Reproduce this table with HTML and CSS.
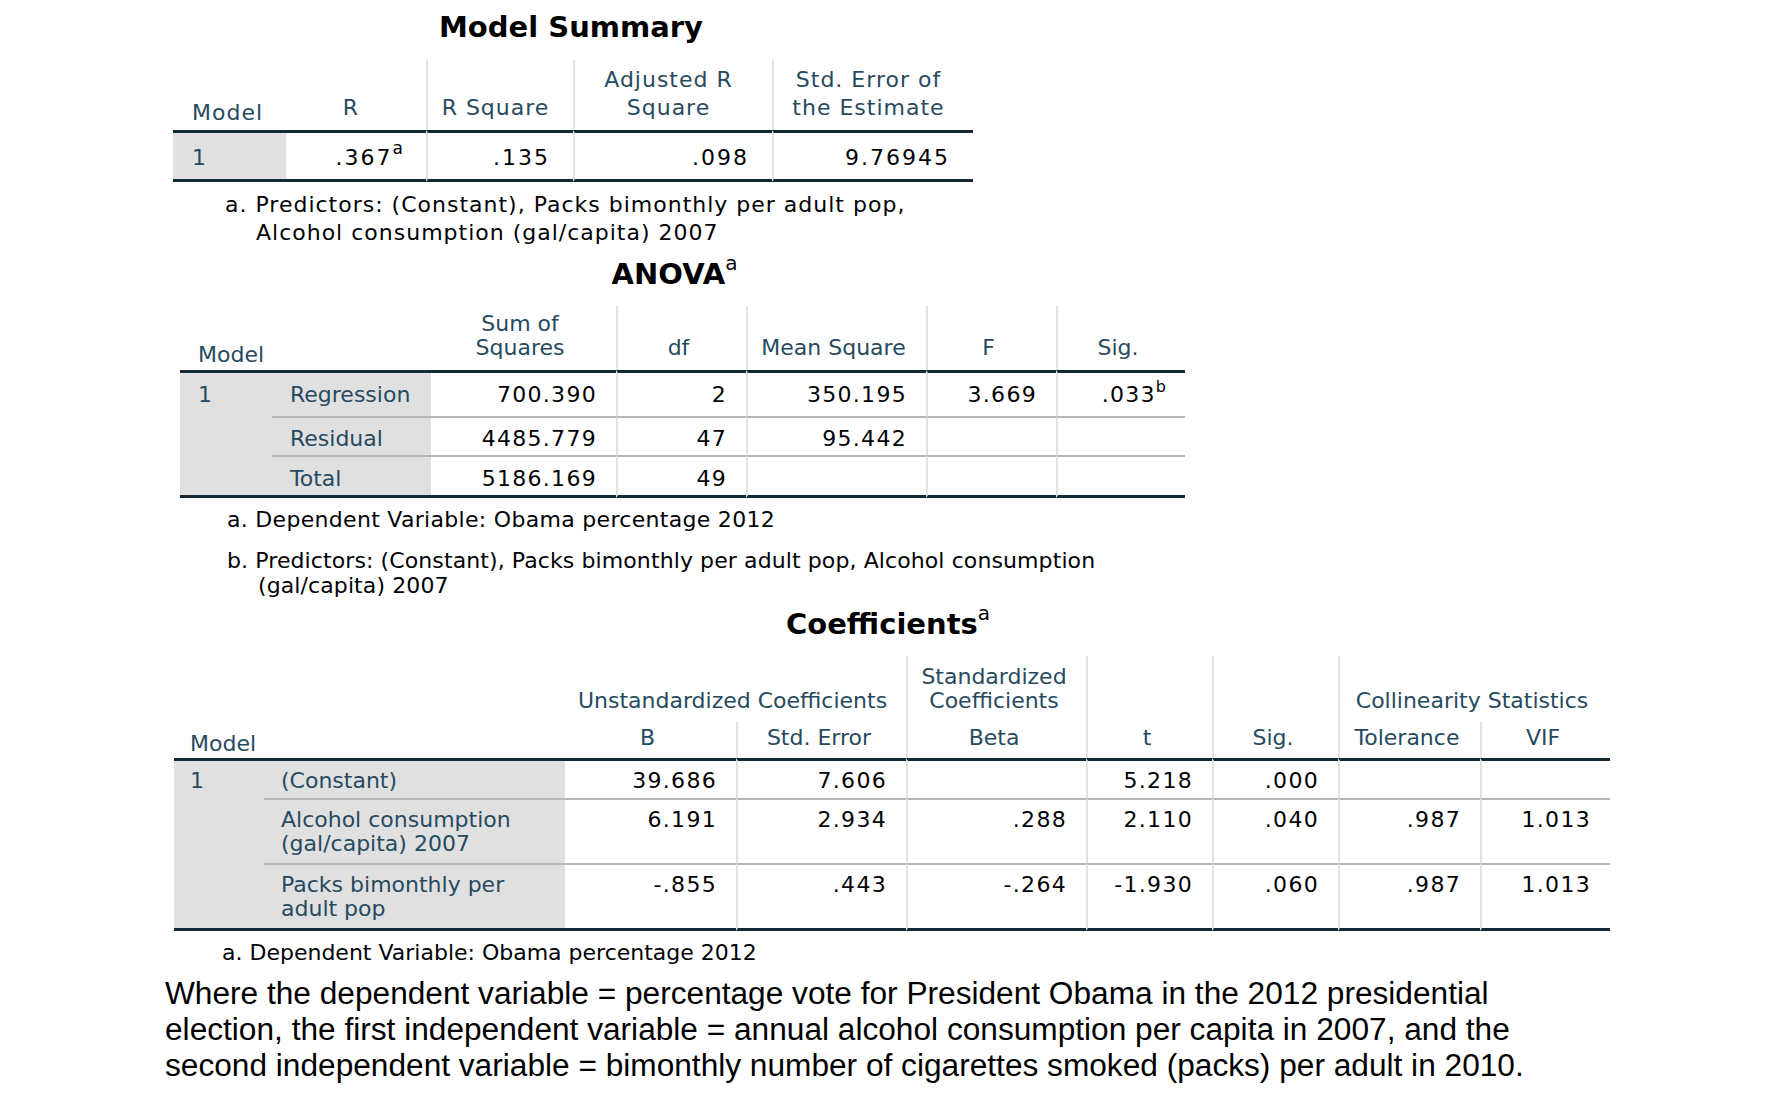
FILE: index.html
```html
<!DOCTYPE html>
<html lang="en">
<head>
<meta charset="utf-8">
<title>Regression output</title>
<link rel="stylesheet" href="styles.css">
</head>
<body>
<main class="page">

  <section class="block ms">
    <h2 class="title">Model Summary</h2>
    <table class="tbl">
      <colgroup><col class="w1"><col class="w2"><col class="w3"><col class="w4"><col class="w5"></colgroup>
      <thead>
        <tr>
          <th class="hd left model">Model</th>
          <th class="hd">R</th>
          <th class="hd vl">R Square</th>
          <th class="hd vl two">Adjusted R<br>Square</th>
          <th class="hd vl two">Std. Error of<br>the Estimate</th>
        </tr>
      </thead>
      <tbody>
        <tr class="first last">
          <td class="lab">1</td>
          <td class="num">.367<sup>a</sup></td>
          <td class="num vl">.135</td>
          <td class="num vl">.098</td>
          <td class="num vl">9.76945</td>
        </tr>
      </tbody>
    </table>
  </section>
  <p class="fn fn-ms">a. Predictors: (Constant), Packs bimonthly per adult pop,<br>Alcohol consumption (gal/capita) 2007</p>

  <section class="block anova">
    <h2 class="title">ANOVA<sup>a</sup></h2>
    <table class="tbl">
      <colgroup><col class="w1"><col class="w2"><col class="w3"><col class="w4"><col class="w5"><col class="w6"><col class="w7"></colgroup>
      <thead>
        <tr>
          <th class="hd left model" colspan="2">Model</th>
          <th class="hd two">Sum of<br>Squares</th>
          <th class="hd vl">df</th>
          <th class="hd vl">Mean Square</th>
          <th class="hd vl">F</th>
          <th class="hd vl">Sig.</th>
        </tr>
      </thead>
      <tbody>
        <tr class="first r1">
          <td class="lab mnum" rowspan="3">1</td>
          <td class="lab">Regression</td>
          <td class="num">700.390</td>
          <td class="num vl">2</td>
          <td class="num vl">350.195</td>
          <td class="num vl">3.669</td>
          <td class="num vl">.033<sup>b</sup></td>
        </tr>
        <tr class="sep r2">
          <td class="lab">Residual</td>
          <td class="num">4485.779</td>
          <td class="num vl">47</td>
          <td class="num vl">95.442</td>
          <td class="num vl"></td>
          <td class="num vl"></td>
        </tr>
        <tr class="sep last r3">
          <td class="lab">Total</td>
          <td class="num">5186.169</td>
          <td class="num vl">49</td>
          <td class="num vl"></td>
          <td class="num vl"></td>
          <td class="num vl"></td>
        </tr>
      </tbody>
    </table>
  </section>
  <p class="fn fn-an fn-a">a. Dependent Variable: Obama percentage 2012</p>
  <p class="fn fn-an fn-b">b. Predictors: (Constant), Packs bimonthly per adult pop, Alcohol consumption<br>(gal/capita) 2007</p>

  <section class="block coef">
    <h2 class="title">Coefficients<sup>a</sup></h2>
    <table class="tbl">
      <colgroup><col class="w1"><col class="w2"><col class="w3"><col class="w4"><col class="w5"><col class="w6"><col class="w7"><col class="w8"><col class="w9"></colgroup>
      <thead>
        <tr class="h1">
          <th class="hd left model" colspan="2" rowspan="2">Model</th>
          <th class="hd" colspan="2">Unstandardized Coefficients</th>
          <th class="hd vl">Standardized<br>Coefficients</th>
          <th class="hd vl span" rowspan="2">t</th>
          <th class="hd vl span" rowspan="2">Sig.</th>
          <th class="hd vl" colspan="2">Collinearity Statistics</th>
        </tr>
        <tr class="h2">
          <th class="hd">B</th>
          <th class="hd vl">Std. Error</th>
          <th class="hd vl">Beta</th>
          <th class="hd vl">Tolerance</th>
          <th class="hd vl">VIF</th>
        </tr>
      </thead>
      <tbody>
        <tr class="first r1">
          <td class="lab mnum" rowspan="3">1</td>
          <td class="lab">(Constant)</td>
          <td class="num">39.686</td>
          <td class="num vl">7.606</td>
          <td class="num vl"></td>
          <td class="num vl">5.218</td>
          <td class="num vl">.000</td>
          <td class="num vl"></td>
          <td class="num vl"></td>
        </tr>
        <tr class="sep r2">
          <td class="lab">Alcohol consumption<br>(gal/capita) 2007</td>
          <td class="num">6.191</td>
          <td class="num vl">2.934</td>
          <td class="num vl">.288</td>
          <td class="num vl">2.110</td>
          <td class="num vl">.040</td>
          <td class="num vl">.987</td>
          <td class="num vl">1.013</td>
        </tr>
        <tr class="sep last r3">
          <td class="lab">Packs bimonthly per<br>adult pop</td>
          <td class="num">-.855</td>
          <td class="num vl">.443</td>
          <td class="num vl">-.264</td>
          <td class="num vl">-1.930</td>
          <td class="num vl">.060</td>
          <td class="num vl">.987</td>
          <td class="num vl">1.013</td>
        </tr>
      </tbody>
    </table>
  </section>
  <p class="fn fn-co">a. Dependent Variable: Obama percentage 2012</p>

  <p class="note">Where the dependent variable = percentage vote for President Obama in the 2012 presidential<br>election, the first independent variable = annual alcohol consumption per capita in 2007, and the<br>second independent variable = bimonthly number of cigarettes smoked (packs) per adult in 2010.</p>

</main>
</body>
</html>
```

FILE: styles.css
```css
html, body {
  margin: 0;
  padding: 0;
  background: #ffffff;
}

body {
  font-family: "DejaVu Sans", "Noto Sans", sans-serif;
  font-size: 22px;
  color: #010205;
}

.page {
  padding-top: 10px;
}

/* ---------- titles ---------- */
.title {
  margin: 0;
  font-size: 29px;
  line-height: 34px;
  font-weight: bold;
  text-align: center;
  color: #000000;
  letter-spacing: 0;
}

.title sup {
  font-size: 20px;
  font-weight: normal;
  line-height: 0;
  vertical-align: 14px;
}

/* ---------- tables ---------- */
.tbl {
  border-collapse: separate;
  border-spacing: 0;
  table-layout: fixed;
  margin-top: 15px;
}

.tbl th,
.tbl td {
  padding: 0;
  font-weight: normal;
  white-space: nowrap;
  line-height: 24px;
}

.hd {
  color: #264a60;
  text-align: center;
  vertical-align: bottom;
}

.hd.left {
  text-align: left;
}

.lab {
  color: #264a60;
  text-align: left;
  vertical-align: top;
  background: #e0e0e0;
}

.num {
  text-align: right;
  vertical-align: top;
  letter-spacing: 1.3px;
  padding-right: 19px !important;
}

.num sup {
  font-size: 16px;
  line-height: 0;
  letter-spacing: 0;
  vertical-align: 10px;
}

.vl {
  border-left: 2px solid #e2e2e2;
}

.first td {
  border-top: 3px solid #152935;
}

.sep td {
  border-top: 2px solid #b7b7b7;
}

.last td,
.mnum {
  border-bottom: 3px solid #152935;
}

/* ---------- footnotes ---------- */
.fn {
  margin: 9px 0 0 0;
  line-height: 25px;
  color: #010205;
  white-space: nowrap;
  padding-left: 31px;
  text-indent: -31px;
}

.fn-b {
  margin-top: 16px;
}

/* ---------- Model Summary ---------- */
.ms {
  margin-left: 173px;
  width: 800px;
  letter-spacing: 1px;
}

.ms .title {
  letter-spacing: 0;
  padding-right: 4px;
}

.ms .tbl {
  width: 800px;
  margin-top: 16px;
}

.ms .w1 { width: 113px; }
.ms .w2 { width: 140px; }
.ms .w3 { width: 147px; }
.ms .w4 { width: 199px; }
.ms .w5 { width: 201px; }

.ms .tbl th,
.ms .tbl td {
  line-height: 28px;
}

.ms .hd {
  padding: 6px 10px 8px 0;
}

.ms .hd.model {
  padding: 0 0 3px 19px;
}

.ms .lab {
  padding: 11px 0 7px 19px;
}

.ms .num {
  padding-top: 11px;
  padding-bottom: 7px;
  letter-spacing: 2px;
  padding-right: 23px !important;
}

.ms .num sup {
  font-size: 17px;
  vertical-align: 11px;
}

.fn-ms {
  margin-left: 225px;
  line-height: 28px;
  letter-spacing: 1px;
}

/* ---------- ANOVA ---------- */
.anova {
  margin-top: 10px;
  margin-left: 180px;
  width: 1005px;
}

.anova .title {
  padding-right: 16px;
}

.anova .tbl {
  width: 1005px;
}

.anova .w1 { width: 92px; }
.anova .w2 { width: 159px; }
.anova .w3 { width: 185px; }
.anova .w4 { width: 130px; }
.anova .w5 { width: 180px; }
.anova .w6 { width: 130px; }
.anova .w7 { width: 129px; }

.anova .hd {
  padding: 6px 7px 10px 0;
}

.anova .hd.model {
  padding: 0 0 3px 18px;
}

.anova .lab {
  padding-left: 18px;
}

.anova .r1 td { padding-top: 10px; padding-bottom: 9px; }
.anova .r2 td { padding-top: 9px; padding-bottom: 4px; }
.anova .r3 td { padding-top: 10px; padding-bottom: 4px; }

.fn-an {
  margin-left: 227px;
}

.fn-a {
  letter-spacing: 0.3px;
}

.fn-b {
  letter-spacing: 0.1px;
}

/* ---------- Coefficients ---------- */
.coef {
  margin-top: 9px;
  margin-left: 174px;
  width: 1436px;
}

.coef .title {
  padding-right: 8px;
}

.coef .tbl {
  width: 1436px;
}

.coef .w1 { width: 90px; }
.coef .w2 { width: 301px; }
.coef .w3 { width: 171px; }
.coef .w4 { width: 170px; }
.coef .w5 { width: 180px; }
.coef .w6 { width: 126px; }
.coef .w7 { width: 126px; }
.coef .w8 { width: 142px; }
.coef .w9 { width: 130px; }

.coef .h1 .hd {
  padding: 9px 6px 9px 0;
}

.coef .h2 .hd {
  padding: 4px 6px 8px 0;
}

.coef .hd.span {
  padding: 0 6px 8px 0;
}

.coef .hd.model {
  padding: 0 0 2px 16px;
}

.coef .lab {
  padding-left: 17px;
}

.coef .lab.mnum {
  padding-left: 16px;
}

.coef .r1 td { padding-top: 8px; padding-bottom: 5px; }
.coef .r2 td { padding-top: 8px; padding-bottom: 7px; }
.coef .r3 td { padding-top: 8px; padding-bottom: 7px; }

.fn-co {
  margin-left: 222px;
}

/* ---------- closing paragraph ---------- */
.note {
  margin: 10px 0 0 165px;
  font-family: "Liberation Sans", Arial, sans-serif;
  font-size: 31.65px;
  line-height: 36px;
  color: #000000;
  white-space: nowrap;
}
```
